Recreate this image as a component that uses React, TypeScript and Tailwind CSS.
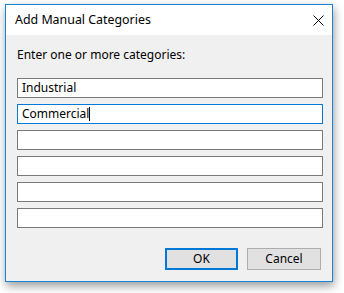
const rows = ["Industrial", "Commercial", "", "", "", ""];

function CloseIcon() {
  return (
    <svg width="11" height="11" viewBox="0 0 11 11" className="block">
      <path d="M0.5 0.5 L10.5 10.5 M10.5 0.5 L0.5 10.5" stroke="#000" strokeWidth="1" fill="none" />
    </svg>
  );
}

export default function App() {
  return (
    <div
      className="w-[344px] h-[293px] bg-white pl-[5px] pt-[4px] text-black"
      style={{ fontFamily: '"Noto Sans", "Open Sans", Arial, sans-serif' }}
    >
      <div className="w-[328px] h-[278px] border border-[#1883d7] bg-[#f0f0f0] flex flex-col shadow-[1px_4px_9px_rgba(0,0,0,0.4)]">
        {/* title bar */}
        <div className="h-[30px] bg-white flex items-center justify-between pl-[9px] pr-[8px]">
          <span className="text-[12.4px] leading-none">Add Manual Categories</span>
          <CloseIcon />
        </div>

        {/* body */}
        <div className="flex-1 flex flex-col px-[11px] pt-[12px]">
          <div className="text-[12px] leading-[16px]">Enter one or more categories:</div>
          <div className="mt-[15px] flex flex-col gap-[6px]">
            {rows.map((text, i) => (
              <div
                key={i}
                className={
                  "h-[20px] w-[306px] bg-white border flex items-center px-[4px] text-[12px] " +
                  (i === 1 ? "border-[#0078d7]" : "border-[#7a7a7a]")
                }
              >
                {text}
                {i === 1 && <span className="inline-block w-px h-[14px] bg-black" />}
              </div>
            ))}
          </div>

          <div className="mt-[20px] flex justify-end gap-[9px]">
            <button className="w-[73px] h-[22px] bg-[#e1e1e1] border-2 border-[#0078d7] text-[12px] leading-none">
              OK
            </button>
            <button className="w-[74px] h-[22px] bg-[#e1e1e1] border border-[#adadad] text-[12px] leading-none">
              Cancel
            </button>
          </div>
        </div>
      </div>
    </div>
  );
}
